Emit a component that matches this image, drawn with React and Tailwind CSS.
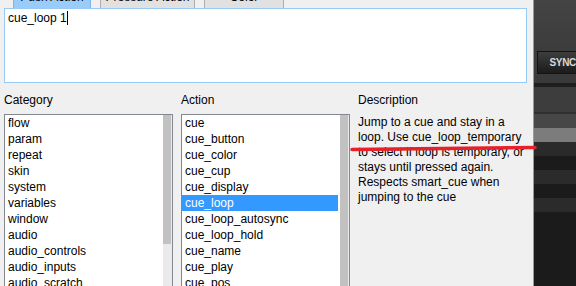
const categories = ['flow', 'param', 'repeat', 'skin', 'system', 'variables', 'window', 'audio', 'audio_controls', 'audio_inputs', 'audio_scratch']
const actions = ['cue', 'cue_button', 'cue_color', 'cue_cup', 'cue_display', 'cue_loop', 'cue_loop_autosync', 'cue_loop_hold', 'cue_name', 'cue_play', 'cue_pos']

function ListBox({ items, selected, thumbHeight }) {
  return (
    <div className="w-[169px] h-[180px] shrink-0 border border-[#828790] bg-white flex overflow-hidden">
      <div className="flex-1 flex flex-col">
        {items.map((item) => (
          <div
            key={item}
            className={`h-[16px] shrink-0 leading-[16px] pl-[3px] whitespace-nowrap ${item === selected ? 'bg-[#3399ff] text-white' : 'text-black'}`}
          >
            {item}
          </div>
        ))}
      </div>
      <div className="w-[2px] bg-white" />
      <div className="w-[9px] bg-[#eaeaea] flex items-start">
        <div className={`w-[8px] bg-[#c1c1c1] ${thumbHeight}`} />
      </div>
    </div>
  )
}

export default function App() {
  return (
    <div className="w-[576px] h-[286px] bg-[#f0f0f0] flex overflow-hidden relative font-['Liberation_Sans',Arial,sans-serif] text-[12px]">
      <div className="w-[534px] flex flex-col">
        {/* tabs, only the bottom edge is visible */}
        <div className="h-[8px] shrink-0 overflow-hidden flex items-end pl-[13px] gap-[9px]">
          <div className="w-[78px] h-[24px] shrink-0 bg-[#99ccf8] border border-[#7eb4ea] border-b-0 flex items-center justify-center leading-none">Push Action</div>
          <div className="w-[95px] h-[24px] shrink-0 bg-[#e1e1e1] border border-[#adadad] border-b-0 flex items-center justify-center leading-none">Pressure Action</div>
          <div className="w-[80px] h-[24px] shrink-0 bg-[#e1e1e1] border border-[#adadad] border-b-0 flex items-center justify-center leading-none">Color</div>
        </div>
        <div className="ml-[4px] w-[523px] h-[75px] shrink-0 border border-[#99c9f5] bg-white px-[3px] pt-[2px] leading-[15px] text-black">
          cue_loop 1<span className="inline-block w-px h-[14px] bg-black align-[-3px]" />
        </div>
        <div className="flex pl-[4px] gap-[8px] mt-[10px] shrink-0">
          <div className="w-[169px] flex flex-col">
            <div className="h-[15px] leading-[15px] text-black">Category</div>
            <div className="mt-[6px]">
              <ListBox items={categories} thumbHeight="h-[129px]" />
            </div>
          </div>
          <div className="w-[169px] flex flex-col">
            <div className="h-[15px] leading-[15px] text-black">Action</div>
            <div className="mt-[6px]">
              <ListBox items={actions} selected="cue_loop" thumbHeight="h-full" />
            </div>
          </div>
          <div className="flex flex-col">
            <div className="h-[15px] leading-[15px] text-black">Description</div>
            <div className="mt-[7px] w-[172px] leading-[15px] text-black">
              Jump to a cue and stay in a loop. Use cue_loop_temporary to select if loop is temporary, or stays until pressed again. Respects smart_cue when jumping to the cue
            </div>
          </div>
        </div>
      </div>
      <div className="w-px bg-[#9a9a9a]" />
      <div className="flex-1 flex flex-col bg-[#1b1b1b]">
        <div className="h-[51px] shrink-0 bg-gradient-to-b from-[#444444] to-[#3c3c3c]" />
        <div className="h-[23px] shrink-0 bg-[#3c3c3c] flex pl-[3px]">
          <div className="flex-1 border border-[#141414] border-r-0 bg-gradient-to-b from-[#3e3e3e] to-[#1c1c1c] flex items-center pl-[11px] text-[10px] font-bold text-[#d8d8d8] tracking-[-0.3px]">SYNC</div>
        </div>
        <div className="h-[9px] shrink-0 bg-[#3a3a3a]" />
        <div className="h-[4px] shrink-0 bg-[#1e1e1e]" />
        <div className="h-[25px] shrink-0 bg-[#3d3d3d]" />
        <div className="h-[2px] shrink-0 bg-[#2f2f2f]" />
        <div className="h-[14px] shrink-0 bg-[#474747]" />
        <div className="h-[14px] shrink-0 bg-[#7c7c7c]" />
        <div className="h-[14px] shrink-0 bg-[#2a2a2a]" />
        <div className="h-[14px] shrink-0 bg-[#1b1b1b]" />
        <div className="h-[14px] shrink-0 bg-[#2b2b2b]" />
        <div className="h-[14px] shrink-0 bg-[#1b1b1b]" />
        <div className="h-[14px] shrink-0 bg-[#2b2b2b]" />
      </div>
      {/* red annotation stroke */}
      <svg className="absolute left-0 top-0 pointer-events-none" width="576" height="286">
        <path d="M352 149.5 L535 147.5" stroke="#e8202a" strokeWidth="3.5" strokeLinecap="round" />
      </svg>
    </div>
  )
}
